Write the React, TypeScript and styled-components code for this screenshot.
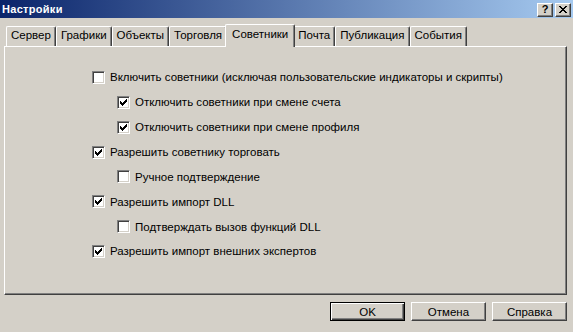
import React from "react";
import styled, { createGlobalStyle } from "styled-components";

const Global = createGlobalStyle`
  html, body { margin: 0; padding: 0; background: #d4d0c8; }
  body { font-family: "Liberation Sans", Arial, sans-serif; font-size: 11.5px; color: #000; }
`;

const Window = styled.div`
  width: 573px;
  height: 332px;
  background: #d4d0c8;
  display: flex;
  flex-direction: column;
  overflow: hidden;
`;

const TitleBar = styled.div`
  height: 18px;
  display: flex;
  align-items: center;
  justify-content: space-between;
  padding: 0 2px 0 2px;
  background: linear-gradient(to right, #0a246a 0%, #a6caf0 100%);
`;

const TitleText = styled.span`
  color: #fff;
  font-weight: bold;
  font-size: 11px;
  letter-spacing: 0.3px;
`;

const TitleButtons = styled.div`
  display: flex;
  gap: 2px;
  margin-top: 1px;
`;

const TitleButton = styled.div`
  width: 16px;
  height: 14px;
  box-sizing: border-box;
  background: #d4d0c8;
  border-top: 1px solid #ffffff;
  border-left: 1px solid #ffffff;
  border-right: 1px solid #404040;
  border-bottom: 1px solid #404040;
  box-shadow: inset -1px -1px 0 #808080;
  display: flex;
  align-items: center;
  justify-content: center;
  font-weight: bold;
  font-size: 11px;
  line-height: 1;
`;

const Body = styled.div`
  flex: 1;
  display: flex;
  flex-direction: column;
  padding: 6px 6px 0 4px;
`;

const TabStrip = styled.div`
  display: flex;
  align-items: flex-end;
  height: 23px;
  padding-left: 2px;
  position: relative;
  z-index: 1;
  margin-bottom: -1px;
`;

const Tab = styled.div<{ $active?: boolean }>`
  box-sizing: border-box;
  height: ${(p) => (p.$active ? 23 : 20)}px;
  padding: ${(p) => (p.$active ? "3px 6px 0 6px" : "2px 4px 0 4px")};
  margin: ${(p) => (p.$active ? "0 -2px 0 -2px" : "0 0 1px 0")};
  background: #d4d0c8;
  border-top: 1px solid #ffffff;
  border-left: 1px solid #ffffff;
  border-right: 1px solid #404040;
  box-shadow: inset -1px 0 0 #808080;
  border-radius: 2px 2px 0 0;
  white-space: nowrap;
  position: relative;
  z-index: ${(p) => (p.$active ? 2 : 0)};
`;

const Panel = styled.div`
  box-sizing: border-box;
  height: 249px;
  border-top: 1px solid #ffffff;
  border-left: 1px solid #ffffff;
  border-right: 1px solid #404040;
  border-bottom: 1px solid #404040;
  box-shadow: inset -1px -1px 0 #808080;
  padding: 18px 0 0 0;
  display: flex;
  flex-direction: column;
`;

const Row = styled.label<{ $level: number }>`
  height: 24.86px;
  flex: none;
  display: flex;
  align-items: center;
  gap: 5px;
  padding-left: ${(p) => 87 + p.$level * 25}px;
`;

const Box = styled.span`
  width: 13px;
  height: 13px;
  box-sizing: border-box;
  background: #fff;
  border-top: 1px solid #808080;
  border-left: 1px solid #808080;
  border-right: 1px solid #ffffff;
  border-bottom: 1px solid #ffffff;
  box-shadow: inset 1px 1px 0 #404040, inset -1px -1px 0 #d4d0c8;
  display: flex;
  align-items: center;
  justify-content: center;
  flex: none;
`;

const ButtonRow = styled.div`
  display: flex;
  justify-content: flex-end;
  gap: 6px;
  padding-top: 7px;
`;

const Button = styled.div<{ $default?: boolean }>`
  width: 75px;
  height: 19px;
  box-sizing: border-box;
  display: flex;
  align-items: center;
  justify-content: center;
  background: #d4d0c8;
  border: 1px solid ${(p) => (p.$default ? "#000" : "transparent")};
  box-shadow: ${(p) =>
    p.$default
      ? "inset 1px 1px 0 #fff, inset -1px -1px 0 #404040, inset -2px -2px 0 #808080"
      : "inset 0 0 0 0 transparent"};
  ${(p) =>
    !p.$default &&
    `border-top-color: #fff; border-left-color: #fff; border-right-color: #404040; border-bottom-color: #404040; box-shadow: inset -1px -1px 0 #808080;`}
`;

const Check = () => (
  <svg width="7" height="7" viewBox="0 0 7 7" shapeRendering="crispEdges">
    <path
      fill="#000"
      d="M6 0h1v3h-1zM5 1h1v3h-1zM4 2h1v3h-1zM3 3h1v3h-1zM2 4h1v3h-1zM1 3h1v3h-1zM0 2h1v3h-1z"
    />
  </svg>
);

const CloseGlyph = () => (
  <svg width="8" height="7" viewBox="0 0 8 7" shapeRendering="crispEdges">
    <path
      fill="#000"
      d="M0 0h2v1h-2zM6 0h2v1h-2zM1 1h2v1h-2zM5 1h2v1h-2zM2 2h4v1h-4zM3 3h2v1h-2zM2 4h4v1h-4zM1 5h2v1h-2zM5 5h2v1h-2zM0 6h2v1h-2zM6 6h2v1h-2z"
    />
  </svg>
);

const tabs = ["Сервер", "Графики", "Объекты", "Торговля", "Советники", "Почта", "Публикация", "События"];

const options: { label: string; level: number; checked: boolean }[] = [
  { label: "Включить советники (исключая пользовательские индикаторы и скрипты)", level: 0, checked: false },
  { label: "Отключить советники при смене счета", level: 1, checked: true },
  { label: "Отключить советники при смене профиля", level: 1, checked: true },
  { label: "Разрешить советнику торговать", level: 0, checked: true },
  { label: "Ручное подтверждение", level: 1, checked: false },
  { label: "Разрешить импорт DLL", level: 0, checked: true },
  { label: "Подтверждать вызов функций DLL", level: 1, checked: false },
  { label: "Разрешить импорт внешних экспертов", level: 0, checked: true },
];

export default function App() {
  return (
    <Window>
      <Global />
      <TitleBar>
        <TitleText>Настройки</TitleText>
        <TitleButtons>
          <TitleButton>?</TitleButton>
          <TitleButton>
            <CloseGlyph />
          </TitleButton>
        </TitleButtons>
      </TitleBar>
      <Body>
        <TabStrip>
          {tabs.map((t) => (
            <Tab key={t} $active={t === "Советники"}>
              {t}
            </Tab>
          ))}
        </TabStrip>
        <Panel>
          {options.map((o) => (
            <Row key={o.label} $level={o.level}>
              <Box>{o.checked && <Check />}</Box>
              <span>{o.label}</span>
            </Row>
          ))}
        </Panel>
        <ButtonRow>
          <Button $default>OK</Button>
          <Button>Отмена</Button>
          <Button>Справка</Button>
        </ButtonRow>
      </Body>
    </Window>
  );
}
